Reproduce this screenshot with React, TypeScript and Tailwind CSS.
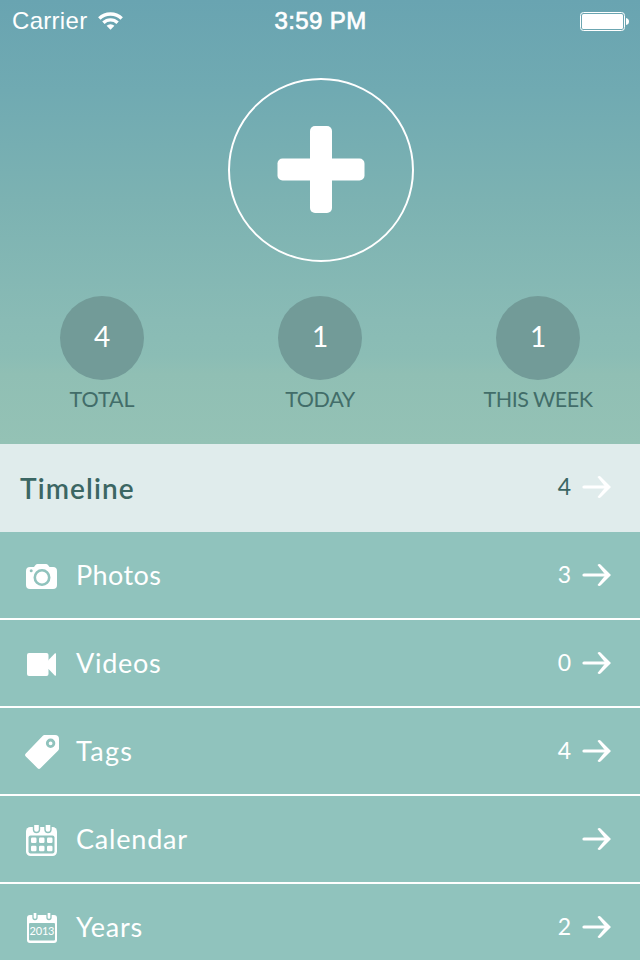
import React from 'react';
import type { ReactNode } from 'react';
import clsx from 'clsx';

interface Stat {
  value: number;
  label: string;
  className: string;
}

interface MenuItem {
  label: string;
  count?: number;
  icon: ReactNode;
  labelClass: string;
}

const stats: Stat[] = [
  { value: 4, label: 'TOTAL', className: 'tracking-[-0.1px]' },
  { value: 1, label: 'TODAY', className: 'tracking-[-0.4px]' },
  { value: 1, label: 'THIS WEEK', className: 'tracking-[-0.5px]' },
];

const CameraIcon = () => (
  <svg width="31" height="25" viewBox="0 0 31 25" className="mt-px">
    <path
      d="M4 3h4l1.500-2Q10.300 0 11.500 0h8.500q1.200 0 2 1L23.500 3H27a4 4 0 0 1 4 4v14a4 4 0 0 1-4 4H4a4 4 0 0 1-4-4V7a4 4 0 0 1 4-4z"
      fill="#fff"
    />
    <circle cx="16" cy="13.500" r="7.200" fill="#fff" stroke="#90c3bd" strokeWidth="2.600" />
    <circle cx="5.200" cy="6.700" r="1.500" fill="#90c3bd" />
  </svg>
);

const VideoIcon = () => (
  <svg width="30" height="23" viewBox="0 0 30 23">
    <rect width="21.500" height="23" rx="2" fill="#fff" />
    <path d="M21 7.500 28 .3Q29 0 29 1v21q0 1-1 .7L21 15.500z" fill="#fff" />
  </svg>
);

const TagIcon = () => (
  <svg width="34" height="34" viewBox="0 0 34 34">
    <path
      d="M19.500 0H30q4 0 4 4v9.500q0 1.200-.8 2L15.400 33.200q-1.400 1.400-2.800 0L.8 21.400q-1.500-1.400 0-2.800L17.600 1q.9-1 1.900-1z"
      fill="#fff"
    />
    <circle cx="25.600" cy="8.300" r="3.300" fill="#fff" stroke="#90c3bd" strokeWidth="2.800" />
  </svg>
);

const CalendarIcon = () => (
  <svg width="31" height="31" viewBox="0 0 31 31">
    <rect y="2" width="31" height="29" rx="4.500" fill="#fff" />
    <rect x="2.500" y="10.500" width="26" height="18" rx="2" fill="#90c3bd" />
    {[7.500, 19].map((x) => (
      <rect key={x} x={x} y="-3" width="6" height="10.500" rx="3" fill="#fff" stroke="#90c3bd" strokeWidth="1.400" />
    ))}
    {[12.500, 20.700].map((y) =>
      [5, 13, 21].map((x) => (
        <rect key={`${x}-${y}`} x={x} y={y} width="5.500" height="5.500" rx="1.200" fill="#fff" />
      ))
    )}
  </svg>
);

const YearsIcon = () => (
  <svg width="30" height="30" viewBox="0 0 30 30">
    <rect y="2" width="30" height="28" rx="3" fill="#fff" />
    <rect x="2" y="10" width="26" height="17.500" rx="1" fill="#90c3bd" />
    {[6, 20].map((x) => (
      <rect key={x} x={x} y="-3" width="4" height="9.500" rx="2" fill="#fff" stroke="#90c3bd" strokeWidth="1.300" />
    ))}
    <text x="15" y="22.300" textAnchor="middle" textLength="25" fontSize="11" fontFamily="Lato" fill="#fff">
      2013
    </text>
  </svg>
);

const ArrowIcon = () => (
  <svg width="30" height="24" viewBox="0 0 30 24">
    <path d="M2 12h24" fill="none" stroke="#fff" strokeWidth="3.200" strokeLinecap="round" />
    <path d="M15.500 2q1.800-1.800 3.500 0L29 12 19 22q-1.700 1.800-3.500 0L23.500 12z" fill="#fff" />
  </svg>
);

const menuItems: MenuItem[] = [
  { label: 'Photos', count: 3, icon: <CameraIcon />, labelClass: 'tracking-[0.4px]' },
  { label: 'Videos', count: 0, icon: <VideoIcon />, labelClass: 'tracking-[0.7px]' },
  { label: 'Tags', count: 4, icon: <TagIcon />, labelClass: 'tracking-[1.3px]' },
  { label: 'Calendar', icon: <CalendarIcon />, labelClass: 'tracking-[0.8px]' },
  { label: 'Years', count: 2, icon: <YearsIcon />, labelClass: 'tracking-[0.8px]' },
];

function StatusBar() {
  return (
    <div className="grid h-10 grid-cols-3 items-center pl-3 pr-[11px] font-['Liberation_Sans',sans-serif] text-white">
      <div className="flex items-center gap-[11px]">
        <span className="text-[24px] leading-[42px] tracking-[0.3px]">Carrier</span>
        <svg width="25" height="19" viewBox="0 0 25 19">
          <g fill="none" stroke="#fff" strokeWidth="3.400">
            <path d="M1.300 6.500a16 16 0 0 1 22.400 0" />
            <path d="M5.400 10.800a10.200 10.200 0 0 1 14.200 0" />
          </g>
          <path d="M8.600 13.800a5.800 5.800 0 0 1 7.800 0L12.500 17.800z" fill="#fff" />
        </svg>
      </div>
      <span className="text-center text-[24px] leading-[42px] tracking-[0.4px] [-webkit-text-stroke:0.7px_white]">
        3:59 PM
      </span>
      <svg width="49" height="19" viewBox="0 0 49 19" className="justify-self-end">
        <rect x=".5" y=".5" width="44" height="18" rx="3" fill="none" stroke="#fff" />
        <rect x="2" y="2" width="41" height="15" rx="1.500" fill="#fff" />
        <path d="M46 6q3 .5 3 3.500T46 13z" fill="#fff" />
      </svg>
    </div>
  );
}

export default function App() {
  return (
    <div className="h-[960px] w-[640px] overflow-hidden bg-[#90c3bd] font-['Lato',sans-serif]">
      {/* Header */}
      <div className="flex h-[444px] flex-col bg-[linear-gradient(to_bottom,#69a4b1_0px,#70aab2_90px,#7cb2b2_200px,#89bbb5_320px,#8bbdb5_356px,#90bfb4_374px,#94c2b5_444px)]">
        <StatusBar />
        <button className="mt-[38px] ml-[228px] h-[184px] w-[186px]">
          <svg width="186" height="184" viewBox="0 0 186 184">
            <ellipse cx="93" cy="92" rx="92" ry="91" fill="none" stroke="#fff" strokeWidth="2" />
            <rect x="82" y="48" width="22" height="87" rx="5" fill="#fff" />
            <rect x="49.500" y="80.500" width="87" height="22" rx="5" fill="#fff" />
          </svg>
        </button>

        {/* Stats */}
        <div className="mt-[34px] flex justify-between px-[22px]">
          {stats.map((stat) => (
            <div key={stat.label} className="flex w-40 flex-col items-center">
              <div className="flex size-[84px] items-center justify-center rounded-full bg-[#729b98] pb-1 text-[28px] text-white">
                {stat.value}
              </div>
              <span className={clsx('mt-1 text-[21.5px] leading-[31px] whitespace-nowrap text-[#426d69]', stat.className)}>
                {stat.label}
              </span>
            </div>
          ))}
        </div>
      </div>

      {/* Menu */}
      <div className="flex h-[88px] items-center bg-[#e0ecec] pr-7 pl-5 text-[#3b6663]">
        <span className="flex-1 text-[28px] font-semibold tracking-[1.1px]">Timeline</span>
        <span className="mr-[11px] pb-1 text-[23px]">4</span>
        <div className="pb-0.5">
          <ArrowIcon />
        </div>
      </div>
      {menuItems.map((item) => (
        <div key={item.label} className="flex h-[88px] items-center border-b-2 border-white pr-7 pl-6 text-white">
          <div className="flex w-[35px] items-center justify-center pt-0.5">{item.icon}</div>
          <span className={clsx('ml-[17px] flex-1 text-[27px]', item.labelClass)}>{item.label}</span>
          {item.count !== undefined && <span className="mr-[11px] pb-0.5 text-[23px]">{item.count}</span>}
          <ArrowIcon />
        </div>
      ))}
    </div>
  );
}
